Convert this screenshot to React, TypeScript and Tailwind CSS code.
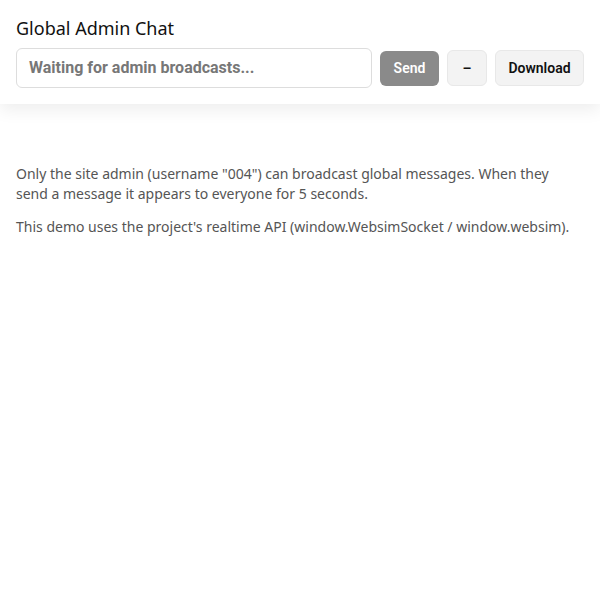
import React from "react";

export default function App() {
  return (
    <div className="min-h-screen bg-white" style={{ fontFamily: '"Noto Sans", sans-serif' }}>
      <header className="bg-white px-4 pt-[15px] pb-[16px] shadow-[0_6px_16px_rgba(0,0,0,0.07)]">
        <h1 className="text-[18px] leading-[26px] text-[#111] font-normal mb-[7px]">Global Admin Chat</h1>
        <div className="flex items-center gap-2">
          <div className="flex-1 h-[40px] rounded-md border border-[#ddd] flex items-center px-3">
            <span className="text-[16px] font-bold text-[#777]" style={{ fontFamily: "Roboto, sans-serif" }}>
              Waiting for admin broadcasts...
            </span>
          </div>
          <button className="h-[35px] w-[59px] rounded-md bg-[#8a8a8a] text-white text-[14px] font-semibold" style={{ fontFamily: "Roboto, sans-serif" }}>
            Send
          </button>
          <button className="h-[36px] w-[40px] rounded-md bg-[#f3f3f3] border border-[#e8e8e8] text-[#111] text-[14px] font-semibold" style={{ fontFamily: "Roboto, sans-serif" }}>
            –
          </button>
          <button className="h-[36px] w-[89px] rounded-md bg-[#f3f3f3] border border-[#e8e8e8] text-[#111] text-[14px] font-semibold" style={{ fontFamily: "Roboto, sans-serif" }}>
            Download
          </button>
        </div>
      </header>
      <main className="px-4 pt-[60px] text-[14px] leading-[20px] text-[#555]">
        <p className="mb-[13px]">
          Only the site admin (username "004") can broadcast global messages. When they send a message it appears to everyone for 5 seconds.
        </p>
        <p>This demo uses the project's realtime API (window.WebsimSocket / window.websim).</p>
      </main>
    </div>
  );
}
